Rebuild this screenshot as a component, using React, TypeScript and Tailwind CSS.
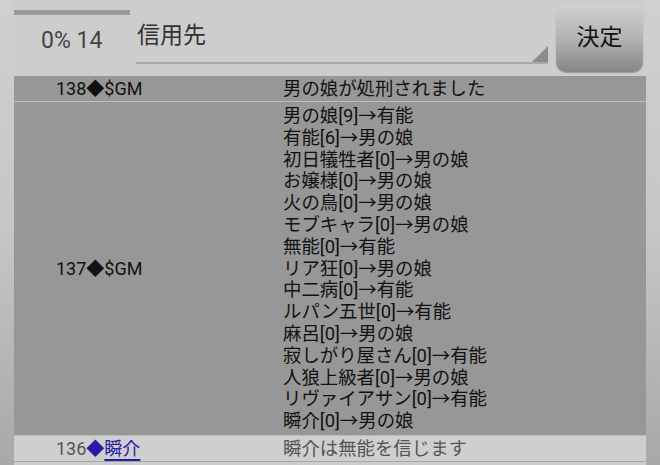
import React from 'react';

type Row = {
    no: number;
    who: string;
    link?: boolean;
    lines: string[];
    light?: boolean;
};

const rows: Row[] = [
    { no: 138, who: '$GM', lines: ['男の娘が処刑されました'] },
    {
        no: 137,
        who: '$GM',
        lines: [
            '男の娘[9]→有能',
            '有能[6]→男の娘',
            '初日犠牲者[0]→男の娘',
            'お嬢様[0]→男の娘',
            '火の鳥[0]→男の娘',
            'モブキャラ[0]→男の娘',
            '無能[0]→有能',
            'リア狂[0]→男の娘',
            '中二病[0]→有能',
            'ルパン五世[0]→有能',
            '麻呂[0]→男の娘',
            '寂しがり屋さん[0]→有能',
            '人狼上級者[0]→男の娘',
            'リヴァイアサン[0]→有能',
            '瞬介[0]→男の娘',
        ],
    },
    { no: 136, who: '瞬介', link: true, light: true, lines: ['瞬介は無能を信じます'] },
];

const App: React.FC = () => {
    return (
        <div
            className="w-[660px] h-[465px] overflow-hidden bg-gradient-to-b from-[#d0d0d0] via-[#c6c6c6] to-[#a8a8a8] text-black"
            style={{ fontFamily: "Roboto, 'Noto Sans CJK JP', sans-serif" }}
        >
            <div className="mx-[14px] h-[465px] bg-[#cdcdcd] flex flex-col">
                {/* header */}
                <div className="h-[76px] flex shrink-0">
                    <div className="w-[116px] flex flex-col">
                        <div className="h-[5px] mt-[10px] bg-[#999999]" />
                        <div className="mt-[12px] pl-[27px] text-[23px] leading-[28px] text-[#444]">0% 14</div>
                    </div>
                    <div className="ml-[6px] w-[412px] h-[64px] relative border-b-2 border-[#a9a9a9]">
                        <div className="pt-[22px] pl-[1px] text-[23px] leading-[28px] text-[#333]">信用先</div>
                        <div className="absolute right-0 bottom-0 w-0 h-0 border-l-[16px] border-l-transparent border-b-[16px] border-b-[#8c8c8c]" />
                    </div>
                    <button className="ml-[8px] mt-[4px] w-[87px] h-[68px] rounded-[10px] bg-gradient-to-b from-[#d2d2d2] via-[#b3b3b3] to-[#878787] text-[23px] text-[#111] shadow-[0_1px_1px_rgba(0,0,0,0.25)]">
                        決定
                    </button>
                </div>

                {/* log */}
                <div className="flex flex-col text-[18px] leading-[21.8px]">
                    {rows.map((row) => (
                        <div
                            key={row.no}
                            className={`grid grid-cols-[269px_1fr] items-center border-b ${
                                row.lines.length > 1 ? 'py-[3px]' : 'py-[1.6px]'
                            } ${
                                row.light
                                    ? 'bg-[#cfcfcf] border-[#a6a6a6] text-[#555]'
                                    : 'bg-[#979797] border-[#bdbdbd] text-[#111]'
                            }`}
                        >
                            <div className="pl-[42px] whitespace-nowrap">
                                {row.no}
                                {row.link ? (
                                    <>
                                        <span className="text-[#2a1aa6]">◆</span>
                                        <span className="text-[#2a1aa6] underline decoration-2 underline-offset-[4px]">{row.who}</span>
                                    </>
                                ) : (
                                    <>
                                        <span>◆</span>
                                        {row.who}
                                    </>
                                )}
                            </div>
                            <div className="flex flex-col text-[18.4px]">
                                {row.lines.map((l, i) => (
                                    <div key={i} className="whitespace-nowrap">{l}</div>
                                ))}
                            </div>
                        </div>
                    ))}
                </div>
            </div>
        </div>
    );
};

export default App;
